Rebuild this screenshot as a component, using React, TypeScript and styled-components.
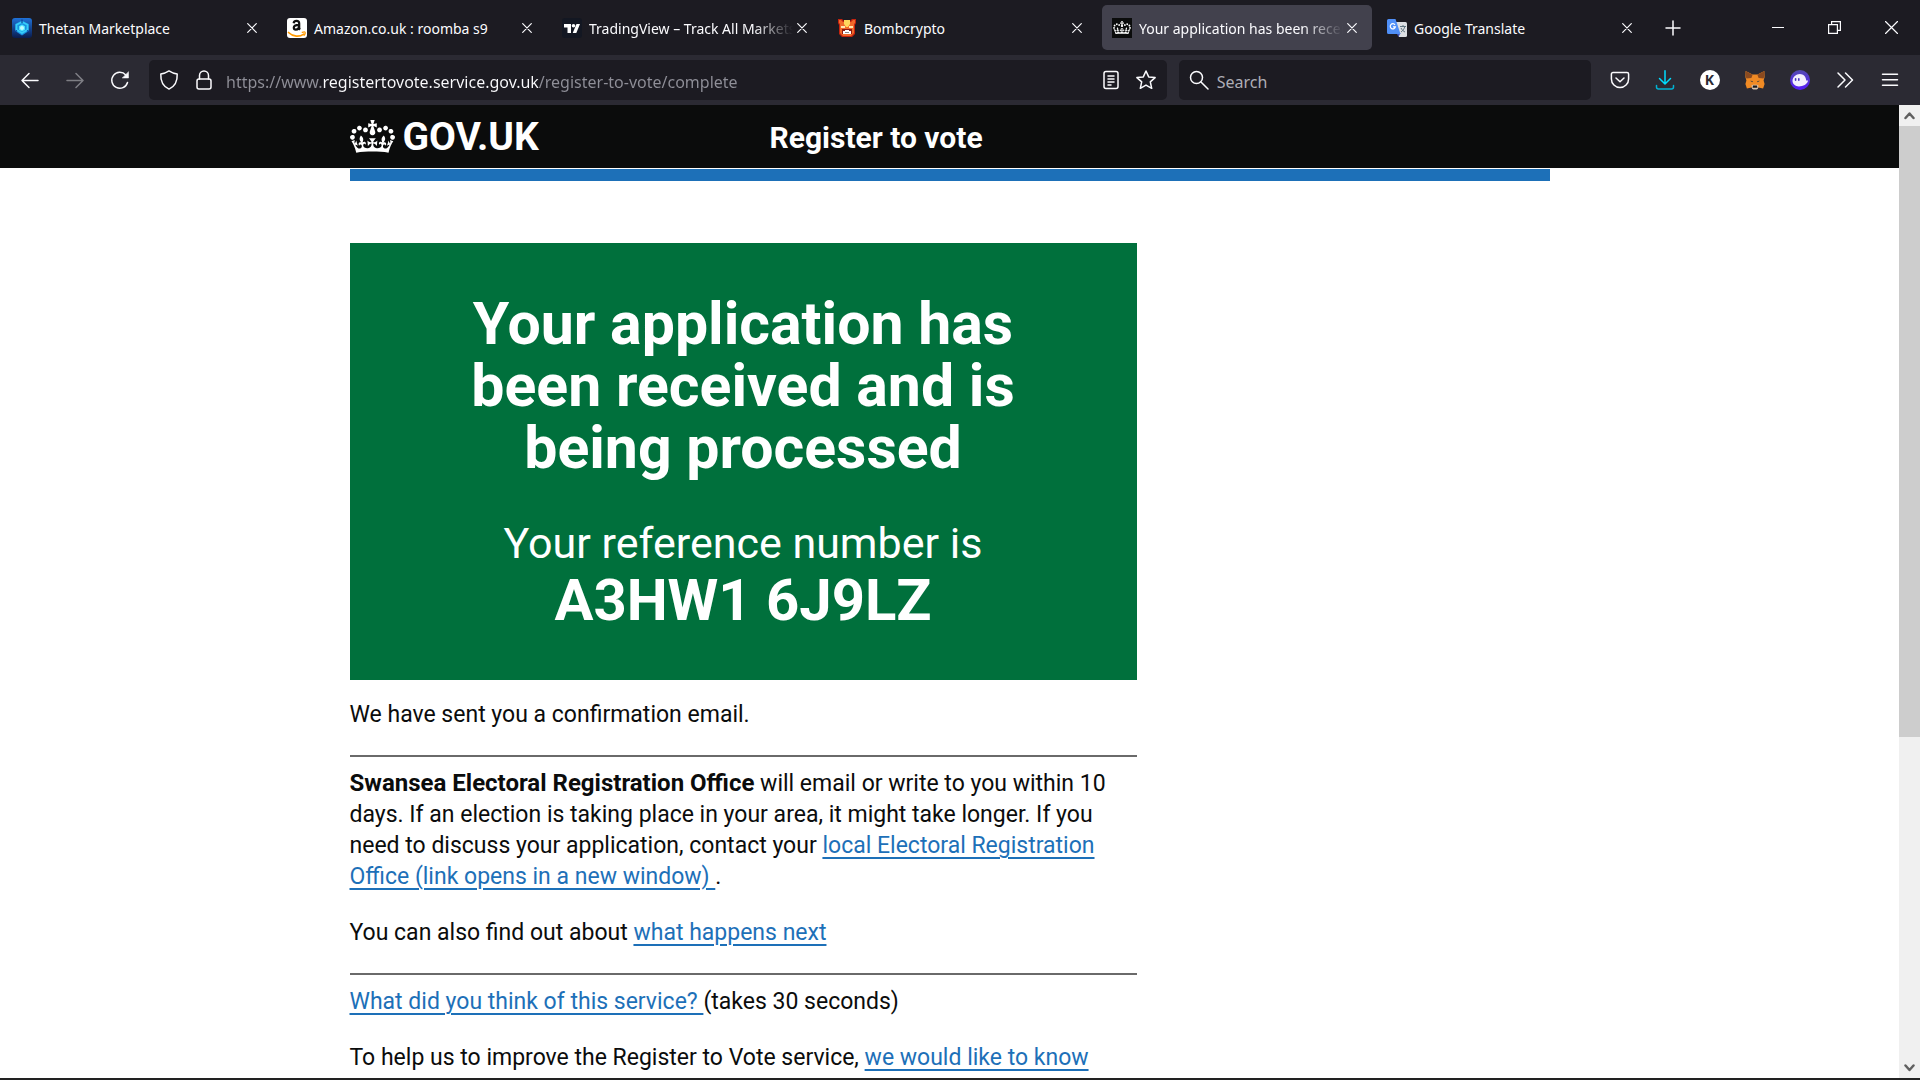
import React from "react";
import styled, { createGlobalStyle, css } from "styled-components";

const uiFont = `"Noto Sans", "Open Sans", sans-serif`;
const pageFont = `Roboto, "Liberation Sans", sans-serif`;

const GlobalStyle = createGlobalStyle`
  *, *::before, *::after { box-sizing: border-box; }
  body { margin: 0; background: #222; overflow: hidden; }
  button { font: inherit; color: inherit; background: none; border: 0; padding: 0; }
  svg { display: block; flex: none; }
`;

const Browser = styled.div`
  display: flex;
  flex-direction: column;
  height: 100vh;
  padding-bottom: 2px;
  background: #222;
  color: #fbfbfe;
  font-family: ${uiFont};
`;

/* Tab strip */

const TabBar = styled.header`
  display: flex;
  flex: none;
  align-items: center;
  height: 55px;
  padding-left: 2px;
  background: #1c1b22;
`;

const TabList = styled.nav`
  display: flex;
  gap: 5px;
  min-width: 0;
`;

const Tab = styled.div<{ $active?: boolean }>`
  display: flex;
  align-items: center;
  width: 270px;
  height: 45px;
  padding: 0 8px 0 10px;
  border-radius: 5px;
  ${(p) => p.$active && css`background: #42414d;`}
`;

const TabLabel = styled.button<{ $fade?: boolean }>`
  display: flex;
  flex: 1;
  align-items: center;
  gap: 7px;
  min-width: 0;
  overflow: hidden;
  white-space: nowrap;
  font-size: 14px;
  line-height: 24px;
  ${(p) => p.$fade && css`
    mask-image: linear-gradient(to right, #000 calc(100% - 40px), transparent 100%);
  `}
`;

const TabTitle = styled.span`
  padding-top: 2px;
`;

const TabClose = styled.button`
  display: grid;
  flex: none;
  place-items: center;
  width: 24px;
  height: 24px;
  margin-left: -3px;
`;

const NewTab = styled.button`
  display: grid;
  place-items: center;
  width: 40px;
  height: 40px;
  margin-left: 6px;
`;

const WindowControls = styled.div`
  display: flex;
  margin-left: auto;
`;

const WindowButton = styled.button`
  display: grid;
  place-items: center;
  width: 57px;
  height: 40px;
`;

/* Navigation toolbar */

const Toolbar = styled.div`
  display: flex;
  flex: none;
  align-items: center;
  height: 50px;
  padding: 0 8px 0 7px;
  background: #2b2a33;
`;

const NavButtons = styled.div`
  display: flex;
  flex: none;
  width: 142px;
`;

const ToolButton = styled.button<{ $dim?: boolean }>`
  display: grid;
  flex: none;
  place-items: center;
  width: 45px;
  height: 40px;
  opacity: ${(p) => (p.$dim ? 0.4 : 1)};
`;

const Field = styled.div<{ $grow: number }>`
  display: flex;
  flex: ${(p) => p.$grow} 1 0;
  align-items: center;
  height: 40px;
  padding-right: 3px;
  border-radius: 5px;
  background: #1c1b22;
`;

const FieldButton = styled.button`
  display: grid;
  flex: none;
  place-items: center;
  width: 35px;
  height: 40px;
`;

const Leading = styled.div`
  display: flex;
  padding: 0 5px 0 2px;
`;

const SearchGlyph = styled.label`
  display: grid;
  flex: none;
  place-items: center;
  width: 38px;
  height: 40px;
  padding-left: 3px;
`;

const Fields = styled.div`
  display: flex;
  flex: 1;
  gap: 12px;
  margin-right: 6px;
`;

const FieldInput = styled.input`
  flex: 1;
  min-width: 0;
  height: 36px;
  padding: 4px 0 0;
  border: 0;
  outline: 0;
  background: transparent;
  color: #fbfbfe;
  font: 16px/24px ${uiFont};
  &::placeholder { color: #aeaeb6; opacity: 1; }
`;

/* The host name is bright, the scheme and the path are dimmed. */
const AddressInput = styled(FieldInput)`
  background: linear-gradient(to right, #8f8f98 97px, #fbfbfe 97px 313px, #8f8f98 313px);
  background-clip: text;
  -webkit-background-clip: text;
  color: transparent;
`;

/* Page viewport */

const Viewport = styled.div`
  display: flex;
  flex: 1;
  min-height: 0;
`;

const Page = styled.div`
  flex: 1;
  min-width: 0;
  overflow: hidden;
  background: #fff;
  color: #0b0c0c;
  font: 23px/31px ${pageFont};
`;

const Container = styled.div`
  width: calc(100% - 60px);
  max-width: 1200px;
  margin: 0 auto;
`;

const SiteHeader = styled.header`
  margin-bottom: 1px;
  background: #0b0c0c;
  color: #fff;
`;

const HeaderRow = styled(Container)`
  display: grid;
  grid-template-columns: 7fr 13fr;
  align-items: center;
  height: 63px;
`;

const HomeLink = styled.a`
  display: flex;
  align-items: center;
  gap: 8px;
  color: #fff;
  font-size: 39px;
  font-weight: 700;
  line-height: 40px;
  text-decoration: none;
`;

const ServiceLink = styled.a`
  padding-top: 2px;
  color: #fff;
  font-size: 30px;
  font-weight: 700;
  line-height: 40px;
  text-decoration: none;
`;

const BlueBar = styled(Container)`
  height: 12px;
  background: #1d70b8;
`;

const Main = styled.main`
  max-width: 787px;
  padding-top: 62px;
`;

const Panel = styled.section`
  padding: 50px 100px 49px;
  background: #00703c;
  color: #fff;
  text-align: center;
`;

const PanelTitle = styled.h1`
  margin: 0 0 39px;
  font-size: 59px;
  font-weight: 700;
  line-height: 62px;
`;

const PanelBody = styled.p`
  margin: 0;
  font-size: 43px;
  line-height: 51px;
`;

const Reference = styled.strong`
  display: block;
  font-size: 58px;
  font-weight: 700;
  line-height: 62px;
`;

const Paragraph = styled.p`
  margin: 0 0 25px;
`;

const Intro = styled(Paragraph)`
  margin-top: 19px;
`;

const Strong = styled.strong`
  font-size: 24px;
  font-weight: 700;
`;

const Rule = styled.hr`
  height: 2px;
  margin: 0 0 11px;
  border: 0;
  background: #6a6a6a;
`;

const Link = styled.a`
  color: #1d70b8;
  text-decoration: underline;
  text-decoration-thickness: 2px;
  text-underline-offset: 4px;
`;

/* Scrollbar */

const Scrollbar = styled.div`
  display: flex;
  flex: none;
  flex-direction: column;
  width: 21px;
  background: #f0f0f0;
`;

const ScrollButton = styled.button`
  display: grid;
  flex: none;
  place-items: center;
  width: 21px;
  height: 21px;
`;

const ScrollTrack = styled.div`
  display: grid;
  flex: 1;
  grid-template-rows: 61fr 32fr;
`;

const ScrollThumb = styled.div`
  background: #cdcdcd;
`;

/* Icons */

const Icon = ({ size = 20, w = 1.5, box = 20, children }: { size?: number; w?: number; box?: number; children: React.ReactNode }) => (
  <svg width={size} height={size} viewBox={`0 0 ${box} ${box}`} fill="none" stroke="currentColor" strokeWidth={w} strokeLinecap="round" strokeLinejoin="round" aria-hidden="true">
    {children}
  </svg>
);

const CloseIcon = () => <Icon size={10} box={10} w={1.2}><path d="M.7.7l8.6 8.6M9.3.7L.7 9.3" /></Icon>;

const CROWN =
  "M25 30.2c3.5 1.5 7.7-.2 9.1-3.7 1.5-3.6-.2-7.8-3.9-9.2-3.6-1.4-7.6.3-9.1 3.9-1.4 3.5.3 7.5 3.9 9zM9 39.5c3.6 1.5 7.8-.2 9.2-3.7 1.5-3.6-.2-7.8-3.9-9.1-3.6-1.5-7.6.2-9.1 3.8-1.4 3.5.3 7.5 3.8 9zM4.4 57.2c3.5 1.5 7.7-.2 9.1-3.8 1.5-3.6-.2-7.7-3.9-9.1-3.5-1.5-7.6.3-9.1 3.8-1.4 3.5.3 7.6 3.9 9.1zm38.3-21.4c3.5 1.5 7.7-.2 9.1-3.8 1.5-3.6-.2-7.7-3.9-9.1-3.6-1.5-7.6.3-9.1 3.8-1.3 3.6.4 7.7 3.9 9.1zm64.4-5.6c-3.6 1.5-7.8-.2-9.1-3.7-1.5-3.6.2-7.8 3.8-9.2 3.6-1.4 7.7.3 9.2 3.9 1.3 3.5-.4 7.5-3.9 9zm15.9 9.3c-3.6 1.5-7.7-.2-9.1-3.7-1.5-3.6.2-7.8 3.7-9.1 3.6-1.5 7.7.2 9.2 3.8 1.5 3.5-.3 7.5-3.8 9zm4.7 17.7c-3.6 1.5-7.8-.2-9.2-3.8-1.5-3.6.2-7.7 3.9-9.1 3.6-1.5 7.7.3 9.2 3.8 1.3 3.5-.4 7.6-3.9 9.1zM89.3 35.8c-3.6 1.5-7.8-.2-9.2-3.8-1.4-3.6.2-7.7 3.9-9.1 3.6-1.5 7.7.3 9.2 3.8 1.4 3.6-.3 7.7-3.9 9.1zM69.7 17.7l8.9 4.7V9.3l-8.9 2.8c-.2-.3-.5-.6-.9-.9L72.4 0H59.6l3.5 11.2c-.3.3-.6.5-.9.9l-8.8-2.8v13.1l8.8-4.7c.3.3.6.7.9.9l-5 15.4v.1c-.2.8-.4 1.6-.4 2.4 0 4.1 3.1 7.5 7 8.1h.2c.3 0 .7.1 1 .1.4 0 .7 0 1-.1h.2c4-.6 7.1-4.1 7.1-8.1 0-.8-.1-1.7-.4-2.4V34l-5.1-15.4c.4-.2.7-.6 1-.9zM66 92.8c16.9 0 32.8 1.1 47.1 3.2 4-16.9 8.9-26.7 14-33.5l-9.6-3.4c1 4.9 1.1 7.2 0 10.2-1.5-1.4-3-4.3-4.2-8.7L108.6 76c2.8-2 5-3.2 7.5-3.3-4.4 9.4-10 11.9-13.6 11.2-4.3-.8-6.3-4.6-5.6-7.9 1-4.7 5.7-5.9 8-.5 4.3-8.7-3-11.4-7.6-8.8 7.1-7.2 7.9-13.5 2.1-21.1-8 6.1-8.1 12.3-4.5 20.8-4.7-5.4-12.1-2.5-9.5 6.2 3.4-5.2 7.9-2 7.2 3.1-.6 4.3-6.4 7.8-13.5 7.2-10.3-.9-10.9-8-11.2-13.8 2.5-.5 7.1 1.8 11 7.3L80.2 60c-4.1 4.4-8 5.3-12.3 5.4 1.4-4.4 8-11.6 8-11.6H55.5s6.4 7.2 7.9 11.6c-4.2-.1-8-1-12.3-5.4l1.4 16.4c3.9-5.5 8.5-7.7 10.9-7.3-.3 5.8-.9 12.8-11.1 13.8-7.2.6-12.9-2.9-13.5-7.2-.7-5 3.8-8.3 7.1-3.1 2.7-8.7-4.6-11.6-9.4-6.2 3.7-8.5 3.6-14.7-4.6-20.8-5.8 7.6-5 13.9 2.2 21.1-4.7-2.6-11.9.1-7.7 8.8 2.3-5.5 7.1-4.2 8.1.5.7 3.3-1.3 7.1-5.7 7.9-3.5.7-9-1.8-13.5-11.2 2.5.1 4.7 1.3 7.5 3.3l-4.7-15.4c-1.2 4.4-2.7 7.2-4.3 8.7-1.1-3-.9-5.3 0-10.2l-9.5 3.4c5 6.9 9.9 16.7 14 33.5 14.8-2.1 30.8-3.2 47.7-3.2z";

const Crown = () => (
  <svg width="45" height="33" viewBox="0 0 132 97" fill="currentColor" aria-hidden="true"><path d={CROWN} /></svg>
);

const ThetanIcon = () => (
  <svg width="20" height="20" viewBox="0 0 20 20" aria-hidden="true">
    <defs><linearGradient id="tm" x1="0" y1="0" x2="0" y2="1"><stop offset="0" stopColor="#1f72d8" /><stop offset="1" stopColor="#0a1b4d" /></linearGradient></defs>
    <rect width="20" height="20" rx="3" fill="url(#tm)" />
    <path d="M10 2.500l6.800 3.500v7L10 17.500 3.200 13V6z" fill="#1a8fe0" />
    <path d="M10 4l-5.500 2.800v5L10 15l5.500-3.200v-5z" fill="none" stroke="#35cdf8" strokeWidth="1.800" />
    <path d="M10 6.500l3 1.800v3.400l-3 1.800-3-1.800V8.300z" fill="#4fe6ff" />
    <path d="M10 1.500v3.500M2.500 14l2.500-1.500M17.500 14L15 12.500" stroke="#0d3f96" strokeWidth="1.200" />
    <circle cx="10" cy="10" r="2" fill="#c2fbff" />
  </svg>
);

const AmazonIcon = () => (
  <svg width="20" height="20" viewBox="0 0 20 20" fill="none" aria-hidden="true">
    <rect width="20" height="20" rx="3" fill="#fff" />
    <path d="M6.600 5.200C6.900 3.600 8 2.900 9.500 2.900c1.800 0 2.700.9 2.700 2.500v4.400c0 .9.300 1.400.900 1.900M12 6.800c-3.400 0-5.200.8-5.200 2.800 0 1.300.8 2.100 2 2.100 1.700 0 3.200-1.200 3.200-3.500" stroke="#111" strokeWidth="2.200" />
    <path d="M1.500 14.500c4.500 4.400 11 4.600 15.300 1.600" stroke="#f90" strokeWidth="1.700" strokeLinecap="round" />
    <path d="M15.200 14.400c1.300-.5 2.800-.5 3 0s-.2 1.900-1.100 2.900" stroke="#f90" strokeWidth="1.200" strokeLinecap="round" />
  </svg>
);

const TradingViewIcon = () => (
  <svg width="20" height="20" viewBox="0 0 20 20" aria-hidden="true">
    <rect width="20" height="20" rx="3" fill="#131722" />
    <path d="M2 6h7v9H5.500V9.500H2zM14.500 6H18l-3.700 9h-3.600z" fill="#fff" /><circle cx="11.500" cy="7.800" r="1.800" fill="#fff" />
  </svg>
);

const BombIcon = () => (
  <svg width="20" height="20" viewBox="0 0 20 20" aria-hidden="true">
    <path d="M1 1h4l2 2h6l2-2h4v4l-1 2v9l-3 3H5l-3-3V7L1 5z" fill="#c3230f" />
    <path d="M2 2h2l2 2h8l2-2h2v3l-1 1v9l-3 3H6l-3-3V6L2 5z" fill="#f0692a" />
    <path d="M7 2h6v4l-2 3H9L7 6z" fill="#ffd95c" />
    <path d="M4 8h4v2H4zM12 8h4v2h-4z" fill="#ffe9b0" /><path d="M5 11h10v5H5z" fill="#8d1c12" />
    <path d="M6 13h2v-1h4v1h2v3H6z" fill="#fff" /><path d="M8 14h4v1H8z" fill="#888" />
  </svg>
);

const CrownTabIcon = () => (
  <svg width="20" height="20" viewBox="0 0 20 20" aria-hidden="true">
    <rect width="20" height="20" fill="#0b0c0c" />
    <g transform="translate(1 3) scale(.1365)" fill="#fff"><path d={CROWN} /></g>
  </svg>
);

const TranslateIcon = () => (
  <svg width="20" height="20" viewBox="0 0 20 20" aria-hidden="true">
    <path d="M8 4h10.500A1.500 1.500 0 0120 5.500v12a1.500 1.500 0 01-1.500 1.500H12z" fill="#dcdfe3" />
    <path d="M9.500 15h4l-2 4z" fill="#3f51b5" />
    <path d="M13 8.500h6M16 7v1.500M17.800 8.500c-.5 2.500-2 4.300-3.800 5.500M14 10c1 2 2.500 3.300 4 4" stroke="#5f7480" fill="none" />
    <path d="M1.500 1H8.500l5 15H1.500A1.500 1.500 0 010 14.500v-12A1.500 1.500 0 011.500 1z" fill="#4f8ff7" />
    <path d="M8 6.800A2.600 2.600 0 108.400 8.900H6" stroke="#fff" strokeWidth="1.200" fill="none" />
  </svg>
);

const FoxIcon = () => (
  <svg width="20" height="20" viewBox="0 0 20 20" aria-hidden="true">
    <path d="M.600 1l7 3.500h4.800l7-3.500.2 6-1 3.500 1 3.500-1.500 4.500-4.600-1-1.800 1.500H8.300L6.500 17.500l-4.600 1L.4 14l1-3.500-1-3.500z" fill="#f08a24" />
    <path d="M.600 1l7 3.700-1.200 3.300-4.900.5-.9-2zM19.400 1l-7 3.700 1.200 3.300 4.900.5.9-2z" fill="#8a4a20" />
    <path d="M5 10.800l2.600.2v1.300zM15 10.800l-2.600.2v1.300z" fill="#233447" />
    <path d="M6.500 15.500l1.800-.7h3.400l1.800.7-.6 3.300-1.200.8H8.300l-1.200-.8z" fill="#d8c3b1" />
    <path d="M8 15.500h4l.4 2.200H7.600z" fill="#1b1b1b" />
  </svg>
);

const GhostIcon = () => (
  <svg width="20" height="20" viewBox="0 0 20 20" aria-hidden="true">
    <defs><linearGradient id="ph" x1="0" y1="0" x2="0" y2="1"><stop offset="0" stopColor="#534bb1" /><stop offset="1" stopColor="#551bf9" /></linearGradient></defs>
    <circle cx="10" cy="10" r="10" fill="url(#ph)" />
    <path d="M18 10.500h-1.800C16.200 6.800 13.300 4 9.900 4 6 4 2.600 7 2.500 10.800c0 3.300 3 5.600 6.400 5.600C13 16.400 17.500 14.500 18 10.500z" fill="#f3f0ff" />
    <rect x="4.800" y="8" width="1.600" height="3" rx=".8" fill="#4a35c4" /><rect x="8" y="8" width="1.600" height="3" rx=".8" fill="#4a35c4" />
  </svg>
);

const KBadge = styled.span`
  display: grid;
  place-items: center;
  width: 20px;
  height: 20px;
  border-radius: 50%;
  background: #fff;
  color: #2b2a33;
  font: 700 14px/20px ${uiFont};
`;

const tabs = [
  { title: "Thetan Marketplace", icon: <ThetanIcon /> },
  { title: "Amazon.co.uk : roomba s9", icon: <AmazonIcon /> },
  { title: "TradingView – Track All Markets", icon: <TradingViewIcon />, fade: true },
  { title: "Bombcrypto", icon: <BombIcon /> },
  { title: "Your application has been received", icon: <CrownTabIcon />, fade: true, active: true },
  { title: "Google Translate", icon: <TranslateIcon /> },
];

export default function App() {
  return (
    <Browser>
      <GlobalStyle />
      <TabBar>
        <TabList aria-label="Tabs">
          {tabs.map((t) => (
            <Tab key={t.title} $active={t.active}>
              <TabLabel $fade={t.fade}>{t.icon}<TabTitle>{t.title}</TabTitle></TabLabel>
              <TabClose aria-label={`Close ${t.title}`}><CloseIcon /></TabClose>
            </Tab>
          ))}
        </TabList>
        <NewTab aria-label="New tab"><Icon size={16} box={16}><path d="M8 1v14M1 8h14" /></Icon></NewTab>
        <WindowControls>
          <WindowButton aria-label="Minimise"><Icon size={12} box={12} w={1}><path d="M0 5.500h12" /></Icon></WindowButton>
          <WindowButton aria-label="Restore"><Icon size={13} box={13} w={1.200}><path d="M.6 3.600h8.800v8.800H.6zM3.600 3.600v-3h8.800v8.800h-3" strokeLinejoin="miter" /></Icon></WindowButton>
          <WindowButton aria-label="Close window"><Icon size={13} box={13} w={1.200}><path d="M.5.500l12 12M12.500.500l-12 12" /></Icon></WindowButton>
        </WindowControls>
      </TabBar>

      <Toolbar>
        <NavButtons>
          <ToolButton aria-label="Back"><Icon><path d="M18 10.500H2M9 3.500l-7 7 7 7" /></Icon></ToolButton>
          <ToolButton aria-label="Forward" $dim><Icon><path d="M2 10.500h16M11 3.500l7 7-7 7" /></Icon></ToolButton>
          <ToolButton aria-label="Reload"><Icon><path d="M17.500 12.500A8 8 0 1115.800 5" /><path d="M18.500 2v6h-6z" fill="currentColor" strokeWidth=".5" /></Icon></ToolButton>
        </NavButtons>
        <Fields>
          <Field $grow={1019}>
            <Leading>
              <FieldButton aria-label="Tracking protection"><Icon><path d="M10 .9c2.500 1.600 5 2.600 8.200 3.200.3 6.500-2 12.200-8.200 15C3.800 16.300 1.500 10.600 1.800 4.100 5 3.500 7.500 2.500 10 .9z" /></Icon></FieldButton>
              <FieldButton aria-label="Site information"><Icon><rect x="3" y="9" width="14" height="10" rx="2" /><path d="M5.500 9V5.400a4.500 4.500 0 019 0V9" /></Icon></FieldButton>
            </Leading>
            <AddressInput aria-label="Address" defaultValue="https://www.registertovote.service.gov.uk/register-to-vote/complete" />
            <FieldButton aria-label="Reader view"><Icon><rect x="3" y="1.500" width="14" height="17" rx="2" /><path d="M7 6h6M7 9h6M7 12h6M7 15h3" /></Icon></FieldButton>
            <FieldButton aria-label="Bookmark"><Icon><path d="M10 1l2.700 5.900 6.400.7-4.800 4.300 1.400 6.400L10 15.100l-5.700 3.200 1.400-6.400L.9 7.600l6.400-.7z" /></Icon></FieldButton>
          </Field>
          <Field $grow={411}>
            <SearchGlyph htmlFor="search"><Icon><circle cx="7.500" cy="7.500" r="6" /><path d="M12 12l7 7" /></Icon></SearchGlyph>
            <FieldInput id="search" type="search" aria-label="Search" placeholder="Search" />
          </Field>
        </Fields>
        <ToolButton aria-label="Save to Pocket"><Icon><path d="M3 2.500h14a1.600 1.600 0 011.600 1.600V9a8.600 8.600 0 01-17.200 0V4.100A1.600 1.600 0 013 2.500z" /><path d="M6 8l4 3.800L14 8" /></Icon></ToolButton>
        <ToolButton aria-label="Downloads"><Icon><g stroke="#00ddff"><path d="M10 .8v13M4.500 8.500L10 14l5.500-5.500" /><path d="M1.500 15.500v1.500a2 2 0 002 2h13a2 2 0 002-2v-1.500" stroke="#00b3d4" /></g></Icon></ToolButton>
        <ToolButton aria-label="Account"><KBadge>K</KBadge></ToolButton>
        <ToolButton aria-label="Fox wallet"><FoxIcon /></ToolButton>
        <ToolButton aria-label="Ghost wallet"><GhostIcon /></ToolButton>
        <ToolButton aria-label="More tools"><Icon><path d="M3 3l7 7-7 7M10.500 3l7 7-7 7" /></Icon></ToolButton>
        <ToolButton aria-label="Menu"><Icon><path d="M2.500 4.200h15M2.500 9.700h15M2.500 15.200h15" /></Icon></ToolButton>
      </Toolbar>

      <Viewport>
        <Page>
          <SiteHeader>
            <HeaderRow>
              <HomeLink href="#"><Crown />GOV.UK</HomeLink>
              <ServiceLink href="#">Register to vote</ServiceLink>
            </HeaderRow>
          </SiteHeader>
          <BlueBar />
          <Container>
            <Main>
              <Panel>
                <PanelTitle>Your application has been received and is being processed</PanelTitle>
                <PanelBody>Your reference number is <Reference>A3HW1 6J9LZ</Reference></PanelBody>
              </Panel>
              <Intro>We have sent you a confirmation email.</Intro>
              <Rule />
              <Paragraph>
                <Strong>Swansea Electoral Registration Office</Strong> will email or write to you within 10 days. If an
                election is taking place in your area, it might take longer. If you need to discuss your application,
                contact your <Link href="#">local Electoral Registration Office (link opens in a new window) </Link>.
              </Paragraph>
              <Paragraph>You can also find out about <Link href="#">what happens next</Link></Paragraph>
              <Rule />
              <Paragraph><Link href="#">What did you think of this service? </Link>(takes 30 seconds)</Paragraph>
              <Paragraph>To help us to improve the Register to Vote service, <Link href="#">we would like to know</Link></Paragraph>
            </Main>
          </Container>
        </Page>
        <Scrollbar>
          <ScrollButton aria-label="Scroll up"><Icon size={11} box={11} w={2.500}><path d="M1.500 8l4-4.500 4 4.500" stroke="#606060" /></Icon></ScrollButton>
          <ScrollTrack><ScrollThumb /></ScrollTrack>
          <ScrollButton aria-label="Scroll down"><Icon size={11} box={11} w={2.500}><path d="M1.500 3.500l4 4.500 4-4.500" stroke="#606060" /></Icon></ScrollButton>
        </Scrollbar>
      </Viewport>
    </Browser>
  );
}
